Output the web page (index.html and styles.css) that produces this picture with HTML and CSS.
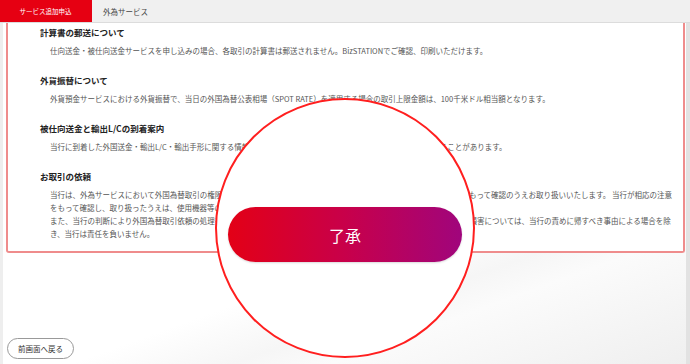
FILE: index.html
```html
<!DOCTYPE html>
<html lang="ja">

<head>
  <meta charset="UTF-8">
  <meta name="viewport" content="width=device-width, initial-scale=1.0">
  <title>外為サービス 追加申込</title>
  <link rel="stylesheet" href="styles.css">
</head>

<body>
  <nav class="tabs">
    <a class="tab active">サービス追加申込</a>
    <a class="tab">外為サービス</a>
  </nav>

  <div class="page">
    <main class="main">
      <section class="notice">
        <h3>計算書の郵送について</h3>
        <p>仕向送金・被仕向送金サービスを申し込みの場合、各取引の計算書は郵送されません。BizSTATIONでご確認、印刷いただけます。</p>

        <h3>外貨振替について</h3>
        <p>外貨預金サービスにおける外貨振替で、当日の外国為替公表相場（SPOT RATE）を適用する場合の取引上限金額は、100千米ドル相当額となります。</p>

        <h3>被仕向送金と輸出L/Cの到着案内</h3>
        <p>当行に到着した外国送金・輸出L/C・輸出手形に関する情報を、BizSTATIONの画面および電子メールにてお知らせすることがあります。</p>

        <h3>お取引の依頼</h3>
        <p>当行は、外為サービスにおいて外国為替取引の権限を有する方からの依頼であることを、当行所定の方法と手続きに従って、もって確認のうえお取り扱いいたします。 当行が相応の注意<br>をもって確認し、取り扱ったうえは、使用機器等の不正使用等によって生じた損害について、当行は責任を負いません。<br>また、当行の判断により外国為替取引依頼の処理を行わなかったこと、または処理が遅延したこと等によりお客さまに生じた損害については、当行の責めに帰すべき事由による場合を除<br>き、当行は責任を負いません。</p>
      </section>

      <div class="footer">
        <button class="back">前画面へ戻る</button>
      </div>
    </main>
    <div class="scrollbar"></div>
  </div>

  <!-- zoomed callout over the confirm button -->
  <div class="lens">
    <button class="agree">了承</button>
  </div>
</body>

</html>
```

FILE: styles.css
```css
body {
  margin: 0;
  padding: 0;
  width: 690px;
  height: 364px;
  overflow: hidden;
  font-family: "Noto Sans CJK JP", "Noto Sans", sans-serif;
  color: #333;
  background: #fff;
  position: relative;
}

.tabs {
  display: flex;
  height: 22px;
  background: #f0f0f0;
  border-bottom: 1px solid #dcdcdc;
}

.tab {
  display: flex;
  align-items: center;
  padding: 0 11px;
  font-size: 7.5px;
  color: #444;
}

.tab.active {
  width: 92px;
  box-sizing: border-box;
  justify-content: center;
  padding: 0 1px 0 0;
  background: #e60012;
  color: #fff;
  font-size: 6.5px;
}

.page {
  display: flex;
  height: 341px;
}

.main {
  flex: 1;
  border-left: 3px solid #eeeeee;
  padding: 0 1px 0 3px;
  background: linear-gradient(160deg, #ffffff 62%, #f6f6f6 72%, #fbfbfb 78%, #efefef 100%);
}

.scrollbar {
  width: 4px;
  background: #e2e2e2;
}

.notice {
  background: #fff;
  border: 2px solid #ef8c8c;
  border-top: 0;
  border-radius: 0 0 3px 3px;
  padding: 3px 0 11px;
}

.notice h3 {
  margin: 0 0 5.8px;
  padding-left: 32px;
  font-size: 8.5px;
  line-height: 12px;
  font-weight: bold;
  color: #222;
}

.notice p {
  margin: 0 0 17.2px;
  padding-left: 42px;
  font-size: 7.5px;
  line-height: 13px;
  color: #555;
  white-space: nowrap;
}

.notice p:last-child {
  margin-bottom: 0;
}

.footer {
  padding: 85px 0 0 1px;
}

.back {
  display: block;
  height: 21px;
  width: 67px;
  border: 1px solid #999;
  border-radius: 11px;
  background: #fff;
  font-family: inherit;
  font-size: 7.5px;
  color: #333;
  padding: 0;
}

.lens {
  position: absolute;
  left: 215px;
  top: 98px;
  width: 260px;
  height: 260px;
  box-sizing: border-box;
  border: 2px solid #ff1f1f;
  border-radius: 50%;
  background: #fff;
  display: flex;
  align-items: center;
  justify-content: center;
  padding-top: 13px;
}

.agree {
  width: 234px;
  height: 55px;
  border: none;
  border-radius: 28px;
  background: linear-gradient(to right, #e30016, #c8004a 50%, #a0057c);
  color: #fff;
  font-family: inherit;
  font-size: 16px;
  box-shadow: 0 1px 2px rgba(0, 0, 0, 0.15);
}
```
